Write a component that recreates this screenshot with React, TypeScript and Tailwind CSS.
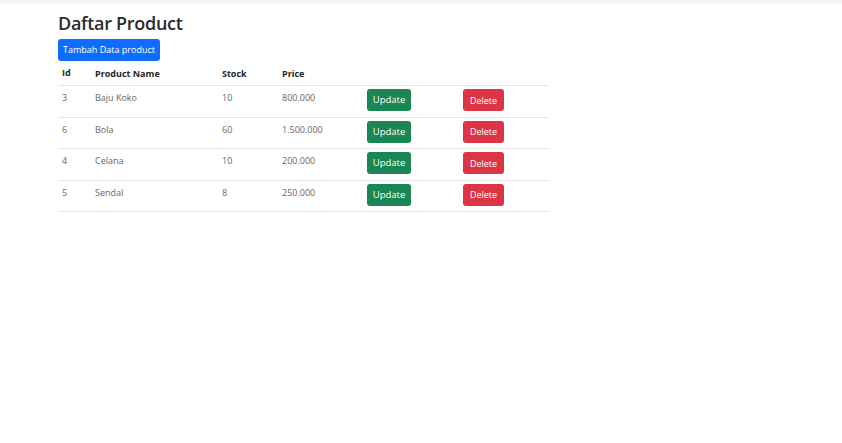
import React from "react";

const products = [
  { id: 3, name: "Baju Koko", stock: 10, price: "800.000" },
  { id: 6, name: "Bola", stock: 60, price: "1.500.000" },
  { id: 4, name: "Celana", stock: 10, price: "200.000" },
  { id: 5, name: "Sendal", stock: 8, price: "250.000" },
];

export default function App() {
  return (
    <div className="min-h-[443px] w-[842px] bg-white font-['Open_Sans','Noto_Sans',sans-serif] text-[#212529]">
      <div className="h-[5px] bg-gradient-to-b from-[#f1f1f1] to-[#fbfbfb]" />
      <div className="pl-[58px] pt-[6px]">
        <h1 className="text-[18px] font-semibold leading-[24px] tracking-[-0.3px] text-[#2b2b2b]">Daftar Product</h1>
        <button className="mt-[1px] h-[22px] w-[102px] rounded-[3px] bg-[#0d6efd] text-[9px] text-white">
          Tambah Data product
        </button>
        <table className="mt-[1px] w-[491px] border-collapse text-[9px]">
          <thead>
            <tr className="border-b border-[#e5e5e5] text-left">
              <th className="w-[33px] px-[4px] pt-[4px] pb-[6px] font-bold">Id</th>
              <th className="w-[127px] px-[4px] font-bold">Product Name</th>
              <th className="w-[60px] px-[4px] font-bold">Stock</th>
              <th className="w-[85px] px-[4px] font-bold">Price</th>
              <th className="w-[96px]" />
              <th />
            </tr>
          </thead>
          <tbody>
            {products.map((p) => (
              <tr key={p.id} className="h-[31.5px] border-b border-[#e5e5e5] text-[#666]">
                <td className="px-[4px] pt-[5px] align-top">{p.id}</td>
                <td className="px-[4px] pt-[5px] align-top">{p.name}</td>
                <td className="px-[4px] pt-[5px] align-top">{p.stock}</td>
                <td className="px-[4px] pt-[5px] align-top">{p.price}</td>
                <td className="px-[4px] pt-[3px] align-top">
                  <button className="h-[22px] w-[44px] rounded-[3px] bg-[#198754] text-[9.5px] text-white">
                    Update
                  </button>
                </td>
                <td className="px-[4px] pt-[3px] align-top">
                  <button className="h-[22px] w-[41px] rounded-[3px] bg-[#dc3545] text-[9px] text-white">
                    Delete
                  </button>
                </td>
              </tr>
            ))}
          </tbody>
        </table>
      </div>
    </div>
  );
}
